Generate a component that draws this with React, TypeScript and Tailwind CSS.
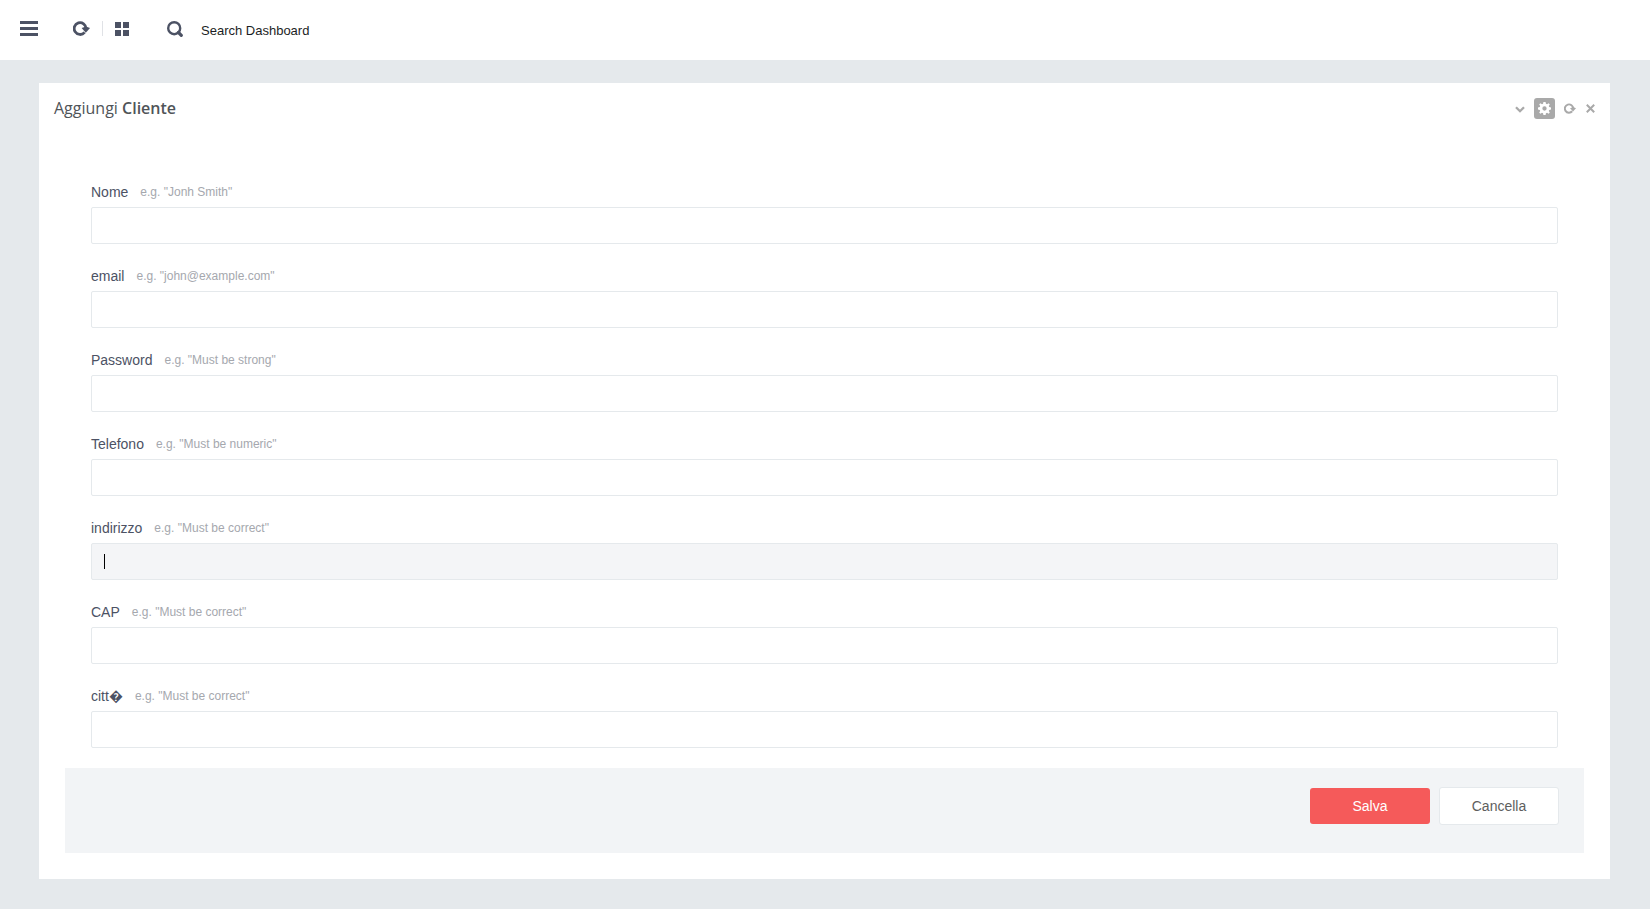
import type { ReactNode } from 'react';

type Field = {
    id: string;
    label: string;
    hint: string;
    type: string;
    active?: boolean;
};

const fields: Field[] = [
    { id: 'nome', label: 'Nome', hint: 'e.g. "Jonh Smith"', type: 'text' },
    { id: 'email', label: 'email', hint: 'e.g. "john@example.com"', type: 'email' },
    { id: 'password', label: 'Password', hint: 'e.g. "Must be strong"', type: 'password' },
    { id: 'telefono', label: 'Telefono', hint: 'e.g. "Must be numeric"', type: 'text' },
    { id: 'indirizzo', label: 'indirizzo', hint: 'e.g. "Must be correct"', type: 'text', active: true },
    { id: 'cap', label: 'CAP', hint: 'e.g. "Must be correct"', type: 'text' },
    { id: 'citta', label: 'citt\uFFFD', hint: 'e.g. "Must be correct"', type: 'text' },
];

function IconButton({ label, className = '', children }: { label: string; className?: string; children: ReactNode }) {
    return (
        <button type="button" aria-label={label} className={`flex shrink-0 items-center justify-center ${className}`}>
            {children}
        </button>
    );
}

function ReloadIcon({ className }: { className: string }) {
    return (
        <svg viewBox="0 0 17 15" className={className} aria-hidden="true">
            <path d="M11.6 11.4A5.9 5.9 0 1 1 13 7.500" fill="none" stroke="currentColor" strokeWidth="2.800" />
            <path d="M8.600 7L13 5.500 17 7l-4.200 4.800z" fill="currentColor" />
        </svg>
    );
}

function TopBar() {
    return (
        <header className="flex h-15 items-start bg-white pt-5 pl-5 text-[#4c5264]">
            <IconButton label="Menu" className="mr-[35px] h-[17px] w-[18px]">
                <svg viewBox="0 0 18 15" className="h-[15px] w-[18px]" fill="currentColor" aria-hidden="true">
                    <path d="M0 0h18v3H0zM0 6h18v3H0zM0 12h18v3H0z" />
                </svg>
            </IconButton>
            <IconButton label="Reload" className="mr-3 h-[17px] w-[17px]">
                <ReloadIcon className="h-[15px] w-[17px]" />
            </IconButton>
            <span className="mt-px h-[15px] w-px bg-[#e0e2e6]" />
            <IconButton label="Apps" className="ml-3 h-[18px] w-[14px]">
                <svg viewBox="0 0 14 14" className="size-3.5" fill="currentColor" aria-hidden="true">
                    <path d="M0 0h6v6H0zM8 0h6v6H8zM0 8h6v6H0zM8 8h6v6H8z" />
                </svg>
            </IconButton>
            <label htmlFor="search" className="mr-3 ml-[38px] pt-px">
                <svg viewBox="0 0 16 16" className="size-4" fill="none" stroke="currentColor" aria-hidden="true">
                    <circle cx="7.2" cy="7.2" r="6" strokeWidth="2.4" />
                    <path d="M11.5 11.500l2.800 2.800" strokeWidth="3.200" strokeLinecap="round" />
                </svg>
            </label>
            <input
                id="search"
                type="text"
                aria-label="Search Dashboard"
                placeholder="Search Dashboard"
                className="h-5 w-60 pl-1.5 text-[13px] text-[#1b1e24] outline-none placeholder:text-[#1b1e24]"
            />
        </header>
    );
}

function PanelTools() {
    return (
        <div className="flex items-center text-[#a9a9a9]">
            <IconButton label="Collapse" className="mr-[9px] h-5 w-[10px] pt-0.5">
                <svg viewBox="0 0 10 7" className="h-[7px] w-2.5" fill="none" stroke="currentColor" aria-hidden="true">
                    <path d="M1 1.200l4 4 4-4" strokeWidth="2.300" />
                </svg>
            </IconButton>
            <IconButton label="Settings" className="mr-[9px] size-[21px] rounded-[3px] bg-[#a9a9a9] text-white">
                <svg viewBox="0 0 24 24" className="size-[13px]" fill="currentColor" aria-hidden="true">
                    <path
                        fillRule="evenodd"
                        d="M10 0h4l.7 3.4 2 .8L19.600 2.300l2.200 2.200-1.900 2.900.8 2L24 10v4l-3.300.7-.8 2 1.900 2.900-2.200 2.200-2.900-1.900-2 .8L14 24h-4l-.7-3.300-2-.8-2.900 1.900-2.200-2.200 1.900-2.900-.8-2L0 14v-4l3.300-.7.8-2-1.900-2.900 2.200-2.200 2.900 1.900 2-.8zM12 8a4 4 0 1 0 0 8 4 4 0 0 0 0-8z"
                    />
                </svg>
            </IconButton>
            <IconButton label="Refresh" className="mr-[10px] h-5 w-[12px]">
                <ReloadIcon className="h-[11px] w-[12px]" />
            </IconButton>
            <IconButton label="Close" className="h-5 w-[9px]">
                <svg viewBox="0 0 9 9" className="size-[9px]" fill="none" stroke="currentColor" aria-hidden="true">
                    <path d="M.8.8l7.400 7.400M8.200.8L.8 8.200" strokeWidth="2" />
                </svg>
            </IconButton>
        </div>
    );
}

function FormField({ field }: { field: Field }) {
    return (
        <div>
            <div className="mb-[5px] flex h-5 items-center">
                <label htmlFor={field.id} className="text-sm text-[#4c5264]">
                    {field.label}
                </label>
                <span id={`${field.id}-hint`} className="ml-3 text-xs text-[#a5a8ae]">
                    {field.hint}
                </span>
            </div>
            <div className="relative">
                <input
                    id={field.id}
                    type={field.type}
                    aria-describedby={`${field.id}-hint`}
                    className={`block h-[37px] w-full rounded-xs border border-[#e5e9ec] px-3 text-sm caret-transparent outline-none ${
                        field.active ? 'bg-[#f4f5f7]' : 'bg-white'
                    }`}
                />
                {/* text cursor of the field being edited */}
                {field.active && <span className="absolute top-[11px] left-[13px] h-[15px] w-px bg-black" />}
            </div>
        </div>
    );
}

export default function App() {
    return (
        <div className="min-h-screen bg-[#e5e9ec] font-['Liberation_Sans',Arial,sans-serif]">
            <TopBar />
            <main className="pt-[23px] pr-10 pb-[31px] pl-[39px]">
                <section className="bg-white pb-[26px]">
                    <div className="flex items-center justify-between pt-[13px] pr-[15px] pl-[15px]">
                        <h4 className="font-['Open_Sans',sans-serif] text-base leading-6 text-[#505458]">
                            Aggiungi <span className="font-semibold">Cliente</span>
                        </h4>
                        <PanelTools />
                    </div>
                    <form className="px-[26px] pt-[62px]">
                        <div className="flex flex-col gap-[22px] px-[26px]">
                            {fields.map((field) => (
                                <FormField key={field.id} field={field} />
                            ))}
                        </div>
                        <div className="mt-5 flex h-[85px] items-start justify-end gap-[9px] bg-[#f2f4f6] pt-[19px] pr-[25px]">
                            <button type="submit" className="mt-px h-9 w-[120px] rounded-[3px] bg-[#f55a5a] text-sm text-white">
                                Salva
                            </button>
                            <button
                                type="button"
                                className="h-[38px] w-[120px] rounded-[3px] border border-[#e5e9ec] bg-white text-sm text-[#5e5e5e]"
                            >
                                Cancella
                            </button>
                        </div>
                    </form>
                </section>
            </main>
        </div>
    );
}
